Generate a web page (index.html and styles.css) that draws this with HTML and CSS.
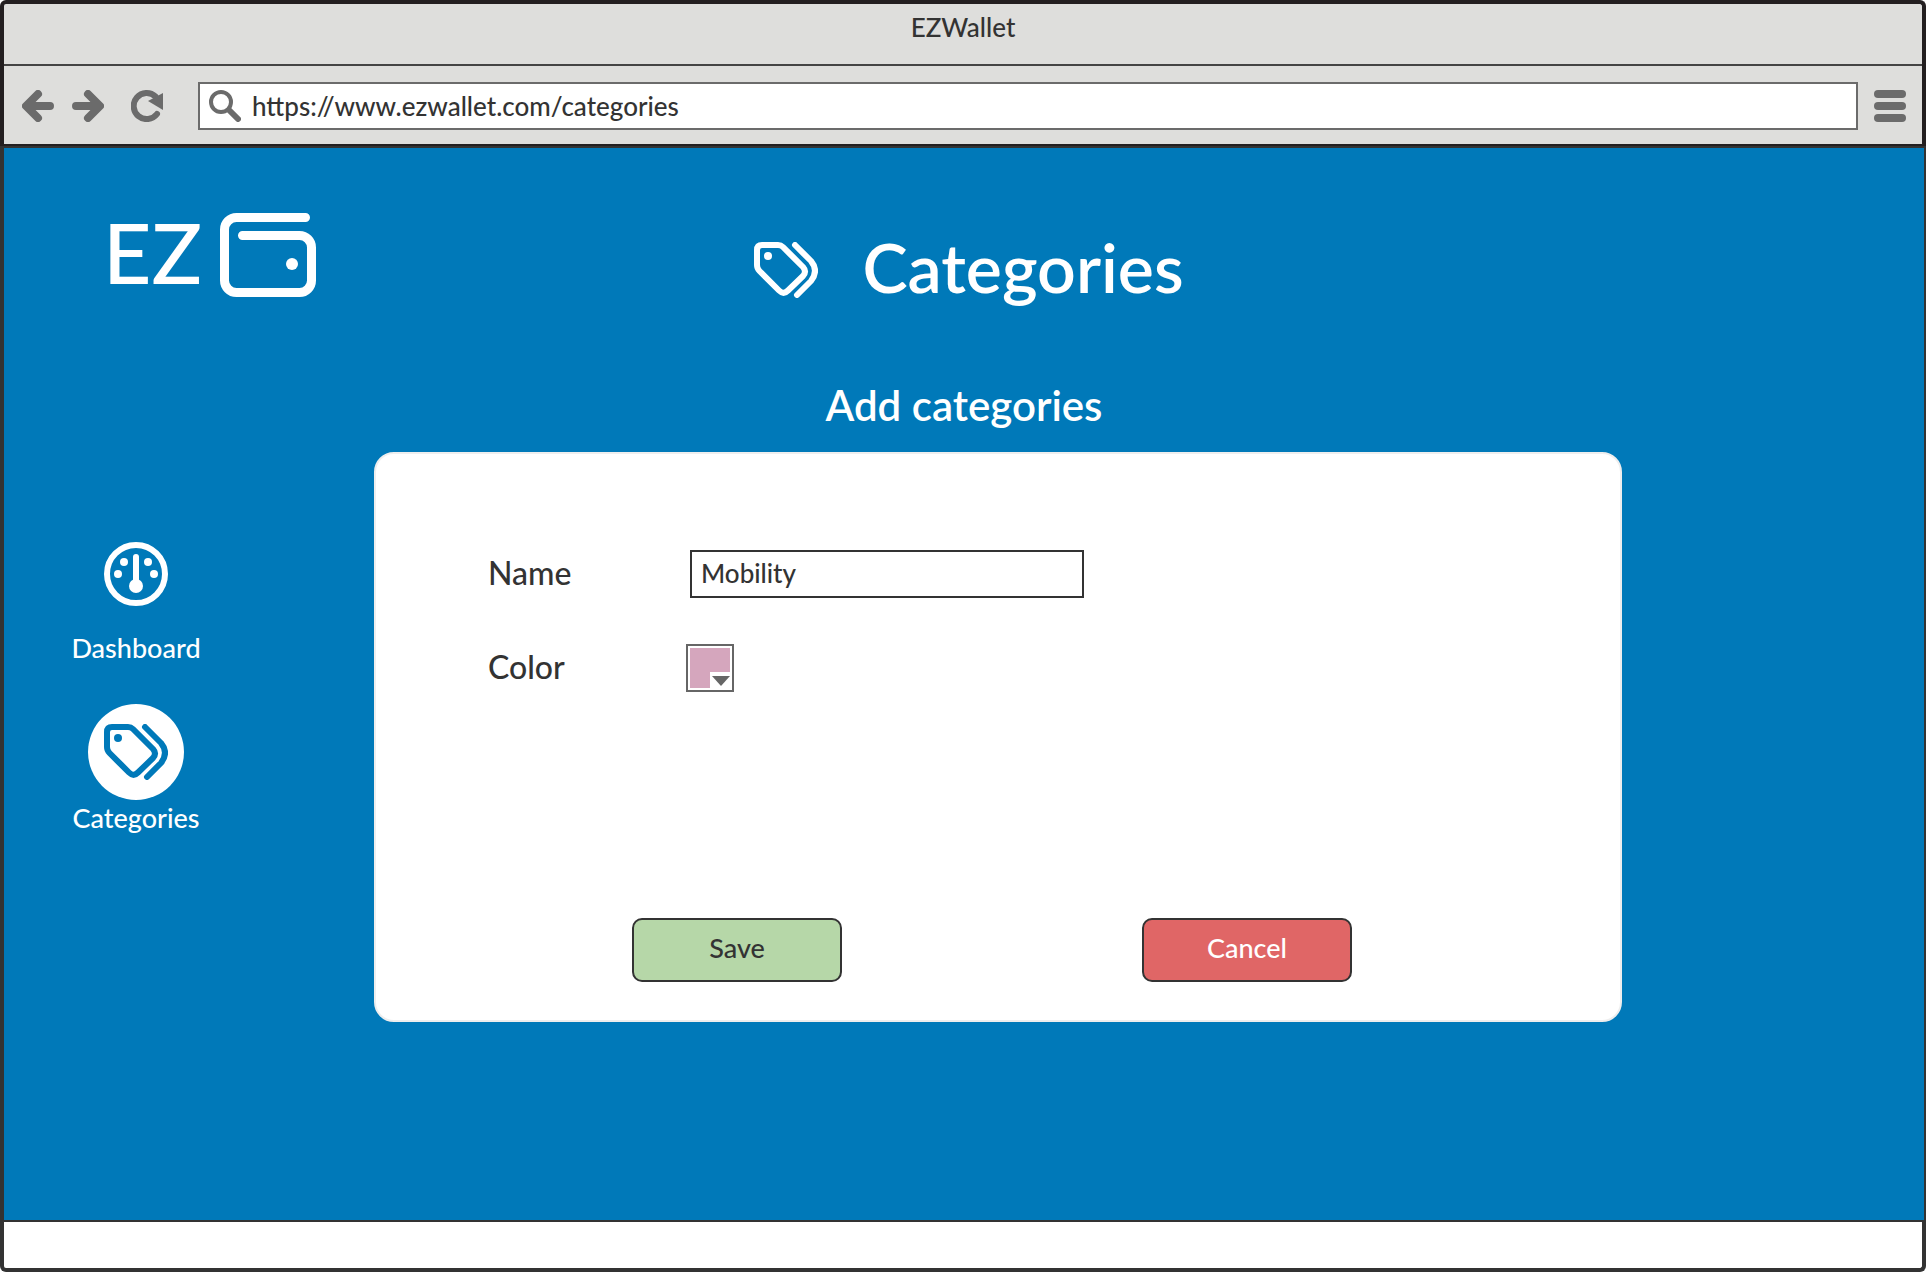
FILE: index.html
```html
<!DOCTYPE html>
<html lang="en">
<head>
<meta charset="utf-8">
<meta name="viewport" content="width=device-width, initial-scale=1">
<title>EZWallet</title>
<link rel="stylesheet" href="styles.css">
</head>
<body>
<svg class="symbols" aria-hidden="true">
  <symbol id="tags" viewBox="0 0 64 56">
    <g fill="none" stroke="currentColor" stroke-width="6" stroke-linecap="round" stroke-linejoin="round">
      <path d="M8 3H24Q27 3 29 5L49 25Q53 29.500 49 34L34 48.500Q29.500 53 25 48.500L5.500 29Q3 26.500 3 23V8Q3 3 8 3Z"/>
      <path d="M41 3L57 19Q65 28.500 57 39L43 53"/>
    </g>
    <circle cx="14" cy="14" r="4" fill="currentColor"/>
  </symbol>
</svg>

<header class="chrome">
  <div class="titlebar">EZWallet</div>
  <div class="toolbar">
    <div class="history">
      <button class="tool" type="button" aria-label="Back">
        <svg width="32" height="32" viewBox="0 0 32 32" fill="none" stroke="currentColor" stroke-width="8" stroke-linecap="round" stroke-linejoin="round"><path d="M28 16H6M16 4L4 16L16 28"/></svg>
      </button>
      <button class="tool" type="button" aria-label="Forward">
        <svg width="32" height="32" viewBox="0 0 32 32" fill="none" stroke="currentColor" stroke-width="8" stroke-linecap="round" stroke-linejoin="round"><path d="M4 16H26M16 4L28 16L16 28"/></svg>
      </button>
    </div>
    <button class="tool reload" type="button" aria-label="Reload">
      <svg width="32" height="32" viewBox="0 0 32 32"><path d="M24.500 6.500A13 13 0 1 0 26 24" fill="none" stroke="currentColor" stroke-width="6" stroke-linecap="round"/><path d="M32 3V20L17 11Z" fill="currentColor"/></svg>
    </button>
    <label class="address">
      <svg width="32" height="32" viewBox="0 0 32 32" fill="none" stroke="currentColor" aria-hidden="true"><circle cx="12" cy="12" r="10" stroke-width="4"/><path d="M20 20L29 29" stroke-width="6" stroke-linecap="round"/></svg>
      <input class="url" type="text" value="https://www.ezwallet.com/categories" aria-label="Address">
    </label>
    <button class="tool" type="button" aria-label="Menu">
      <svg width="32" height="32" viewBox="0 0 32 32" fill="currentColor"><rect width="32" height="8" rx="4"/><rect y="12" width="32" height="8" rx="4"/><rect y="24" width="32" height="8" rx="4"/></svg>
    </button>
  </div>
</header>

<main class="page">
  <a class="logo" href="#" aria-label="EZ Wallet home">
    <span>EZ</span>
    <svg width="96" height="84" viewBox="0 0 96 84" fill="none" stroke="currentColor" stroke-width="9" stroke-linecap="round"><path d="M85.500 4.500H16.500A12 12 0 0 0 4.500 16.500V67.500A12 12 0 0 0 16.500 79.500H79.500A12 12 0 0 0 91.500 67.500V34.500A12 12 0 0 0 79.500 22.500H22.500"/><circle cx="72" cy="51" r="6" fill="currentColor" stroke="none"/></svg>
  </a>
  <h1 class="title">
    <svg width="64" height="56" aria-hidden="true"><use href="#tags"/></svg>
    <span>Categories</span>
  </h1>
  <h2 class="subtitle">Add categories</h2>

  <nav class="sidebar">
    <a class="nav-item" href="#">
      <span class="nav-icon">
        <svg width="64" height="64" viewBox="0 0 64 64" fill="currentColor" aria-hidden="true"><circle cx="32" cy="32" r="29" fill="none" stroke="currentColor" stroke-width="6"/><path d="M32 15V42" stroke="currentColor" stroke-width="6" stroke-linecap="round"/><circle cx="32" cy="44" r="7"/><circle cx="14" cy="32" r="4"/><circle cx="20" cy="20" r="4"/><circle cx="44" cy="20" r="4"/><circle cx="50" cy="32" r="4"/></svg>
      </span>
      Dashboard
    </a>
    <a class="nav-item active" href="#" aria-current="page">
      <span class="nav-icon">
        <svg width="64" height="56" aria-hidden="true"><use href="#tags"/></svg>
      </span>
      Categories
    </a>
  </nav>

  <form class="card">
    <div class="row">
      <label for="name">Name</label>
      <input class="text-field" id="name" type="text" value="Mobility">
    </div>
    <div class="row">
      <label for="color">Color</label>
      <span class="picker">
        <input class="color-field" id="color" type="color" value="#d5a6bd">
        <svg class="arrow" width="22" height="18" viewBox="0 0 22 18" aria-hidden="true"><path d="M0 0H22V18H0Z" fill="#fff"/><path d="M2 4H20L11 14Z" fill="#666"/></svg>
      </span>
    </div>
    <div class="actions">
      <button class="btn save" type="submit">Save</button>
      <button class="btn cancel" type="button">Cancel</button>
    </div>
  </form>
</main>

<footer class="statusbar"></footer>
</body>
</html>
```

FILE: styles.css
```css
* {
  box-sizing: border-box;
}

body {
  margin: 0;
  min-height: 100vh;
  display: flex;
  flex-direction: column;
  background: #fff;
  color: #333;
  font: 500 26px/32px Lato, "Open Sans", sans-serif;
}

button,
input {
  font: inherit;
  color: inherit;
}

svg {
  display: block;
  flex: none;
}

a {
  color: inherit;
  text-decoration: none;
}

.symbols {
  position: absolute;
  width: 0;
  height: 0;
}

/* Browser chrome */
.chrome {
  background: #dededc;
  border: 4px solid #231f20;
  border-bottom: 0;
  border-radius: 6px 6px 0 0;
}

.titlebar {
  height: 62px;
  padding-top: 7px;
  border-bottom: 2px solid #444;
  text-align: center;
}

.toolbar {
  display: flex;
  align-items: center;
  padding: 16px 16px 14px 18px;
  border-bottom: 2px solid #231f20;
}

.history {
  display: flex;
  gap: 18px;
}

.tool {
  padding: 0;
  border: 0;
  background: none;
  color: #6b6b6b;
}

.reload {
  margin: 0 35px 0 27px;
}

.address {
  flex: 1;
  display: flex;
  align-items: center;
  gap: 11px;
  height: 48px;
  margin-right: 16px;
  padding: 0 9px;
  border: 2px solid #6b6b6b;
  background: #fff;
  color: #6b6b6b;
}

.url {
  flex: 1;
  min-width: 0;
  padding: 0;
  border: 0;
  background: none;
  color: #333;
  outline: 0;
}

/* Page */
.page {
  flex: 1;
  display: grid;
  grid-template-columns: 370px 1fr 302px;
  grid-template-rows: 192px 112px auto;
  background: #0079b9;
  border: solid #333;
  border-width: 2px 2px 2px 4px;
  color: #fff;
}

.logo {
  grid-area: 1 / 1;
  align-self: start;
  display: flex;
  align-items: center;
  gap: 18px;
  padding: 64px 0 0 99px;
  font-size: 84px;
  line-height: 80px;
}

.logo span,
.title span {
  padding-bottom: 6px;
}

.title {
  grid-area: 1 / 1 / 2 / 4;
  justify-self: center;
  align-self: start;
  display: flex;
  align-items: center;
  gap: 44px;
  margin: 79px 0 0;
  padding-left: 10px;
  font-size: 68px;
  font-weight: 600;
  line-height: 80px;
}

.subtitle {
  grid-area: 2 / 1 / 3 / 4;
  justify-self: center;
  margin: 41px 0 0;
  font-size: 42px;
  font-weight: 600;
  line-height: 48px;
}

.sidebar {
  grid-area: 3 / 1;
  display: flex;
  flex-direction: column;
  align-items: flex-start;
  gap: 40px;
  padding: 74px 0 0 64px;
  font-size: 27px;
}

.nav-item {
  display: flex;
  flex-direction: column;
  align-items: center;
  gap: 10px;
  min-width: 136px;
}

.nav-item.active {
  gap: 2px;
}

.nav-icon {
  display: grid;
  place-items: center;
  width: 96px;
  height: 96px;
  border-radius: 50%;
}

.active .nav-icon {
  background: #fff;
  color: #0079b9;
}

.card {
  grid-area: 3 / 2;
  align-self: start;
  display: flex;
  flex-direction: column;
  gap: 46px;
  min-height: 570px;
  padding: 96px 112px 38px;
  border: 2px solid #eee;
  border-radius: 20px;
  background: #fff;
  color: #333;
}

.row {
  display: flex;
  align-items: center;
  font-size: 32px;
  line-height: 44px;
}

.row label {
  width: 198px;
  padding-bottom: 2px;
}

.text-field {
  width: 394px;
  height: 48px;
  margin: 0 4px;
  padding: 0 9px 2px;
  border: 2px solid #333;
  background: #fff;
  font-size: 26px;
}

.picker {
  position: relative;
}

.color-field {
  display: block;
  width: 48px;
  height: 48px;
  padding: 2px;
  border: 2px solid #666;
  background: #fff;
  appearance: none;
}

.color-field::-webkit-color-swatch-wrapper {
  padding: 0;
}

.color-field::-webkit-color-swatch {
  border: 0;
}

.arrow {
  position: absolute;
  right: 2px;
  bottom: 2px;
  pointer-events: none;
}

.actions {
  display: flex;
  justify-content: space-between;
  margin-top: auto;
  padding: 0 156px 0 144px;
}

.btn {
  width: 210px;
  height: 64px;
  padding: 0 0 4px;
  border: 2px solid #333;
  border-radius: 10px;
  font-size: 27px;
}

.save {
  background: #b6d7a8;
}

.cancel {
  background: #e06666;
  color: #fff;
}

.statusbar {
  height: 50px;
  border: 4px solid #333;
  border-top: 0;
  border-radius: 0 0 6px 6px;
}
```
